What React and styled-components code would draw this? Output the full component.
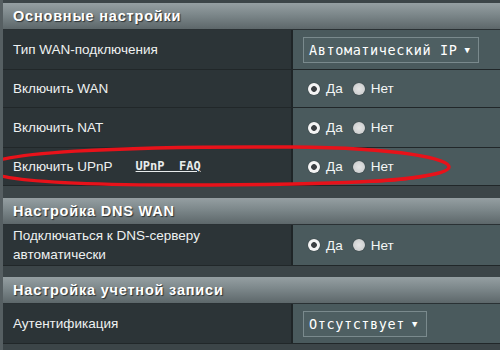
import styled, { createGlobalStyle } from 'styled-components';

const GlobalStyle = createGlobalStyle`
  html, body {
    margin: 0;
    padding: 0;
    background: #3c4548;
    font-family: "Liberation Sans", Arial, sans-serif;
  }
`;

const Page = styled.div`
  position: relative;
  width: 500px;
  height: 350px;
  overflow: hidden;
  background: #3c4548;
  padding-top: 3px;
  box-sizing: border-box;
  border-left: 3px solid #565f62;
`;

const Section = styled.div`
  display: flex;
  flex-direction: column;
  margin-bottom: ${p => p.gap || 0}px;
`;

const Header = styled.div`
  height: 26px;
  display: flex;
  align-items: center;
  padding-left: 10px;
  background: linear-gradient(#959fa2, #7c878a 45%, #5d676a);
  border-bottom: 1px solid #2a3134;
  color: #fff;
  font-weight: bold;
  font-size: 14.5px;
  letter-spacing: 0.8px;
  text-shadow: 1px 1px 1px #2b3235;
`;

const Row = styled.div`
  display: grid;
  grid-template-columns: 290px 1fr;
  height: ${p => p.h || 38}px;
  border-bottom: 1px solid #212729;
`;

const Label = styled.div`
  display: flex;
  align-items: center;
  gap: 23px;
  padding-left: 10px;
  background: #2c3437;
  border-right: 2px solid #1f2527;
  color: #eef1f1;
  font-size: 13.5px;
  line-height: 19px;
`;

const Value = styled.div`
  display: flex;
  align-items: center;
  padding-left: 10px;
  background: #4a5a5d;
  color: #f4f6f6;
  font-size: 13.5px;
`;

const FaqLink = styled.span`
  font-family: "DejaVu Sans Mono", monospace;
  font-size: 12px;
  font-weight: bold;
  color: #e8ecec;
  text-decoration: underline;
  white-space: pre;
`;

const Select = styled.div`
  display: flex;
  align-items: center;
  gap: 7px;
  height: 24px;
  padding: 0 8px 0 5px;
  border: 1px solid #7a8a8d;
  background: #4e5f62;
  color: #fff;
  font-family: "DejaVu Sans Mono", monospace;
  font-size: 13.5px;
  letter-spacing: 0.6px;
`;

const Arrow = styled.span`
  font-size: 9px;
`;

const RadioGroup = styled.div`
  display: flex;
  align-items: center;
  padding-left: 5px;
`;

const RadioDot = styled.span`
  width: 12px;
  height: 12px;
  border-radius: 50%;
  background: ${p => (p.on ? 'radial-gradient(circle, #3b3f42 0 2.5px, #f4f4f4 3.2px)' : 'radial-gradient(circle, #e4e4e4, #c6c8c9)')};
  box-shadow: 0 0 1px #222;
  margin-right: 6px;
`;

const RadioText = styled.span`
  margin-right: 10px;
`;

const Ellipse = styled.svg`
  position: absolute;
  left: 0;
  top: 0;
  pointer-events: none;
`;

const Radios = () => (
  <RadioGroup>
    <RadioDot on />
    <RadioText>Да</RadioText>
    <RadioDot />
    <RadioText>Нет</RadioText>
  </RadioGroup>
);

export default function App() {
  return (
    <>
      <GlobalStyle />
      <Page>
        <Section gap={12}>
          <Header>Основные настройки</Header>
          <Row h={39}>
            <Label>Тип WAN-подключения</Label>
            <Value>
              <Select>Автоматический IP <Arrow>▼</Arrow></Select>
            </Value>
          </Row>
          <Row h={37}>
            <Label>Включить WAN</Label>
            <Value><Radios /></Value>
          </Row>
          <Row h={39}>
            <Label>Включить NAT</Label>
            <Value><Radios /></Value>
          </Row>
          <Row h={37}>
            <Label>
              Включить UPnP
              <FaqLink>UPnP  FAQ</FaqLink>
            </Label>
            <Value><Radios /></Value>
          </Row>
        </Section>
        <Section gap={11}>
          <Header>Настройка DNS WAN</Header>
          <Row h={40}>
            <Label>Подключаться к DNS-серверу<br />автоматически</Label>
            <Value><Radios /></Value>
          </Row>
        </Section>
        <Section>
          <Header>Настройка учетной записи</Header>
          <Row h={39}>
            <Label>Аутентификация</Label>
            <Value>
              <Select>Отсутствует <Arrow>▼</Arrow></Select>
            </Value>
          </Row>
        </Section>
        <Ellipse width="500" height="350" viewBox="0 0 500 350">
          <path
            d="M -18 168 C -18 152, 120 146, 290 147 C 400 148, 446 159, 446 167 C 446 175, 400 182, 290 184 C 120 187, -18 184, -18 168 Z"
            fill="none"
            stroke="#e8121a"
            strokeWidth="3.5"
          />
          <path
            d="M 370 180 C 420 177, 444 172, 446 167 C 440 175, 415 181, 370 183 Z"
            fill="#e8121a"
          />
        </Ellipse>
      </Page>
    </>
  );
}
